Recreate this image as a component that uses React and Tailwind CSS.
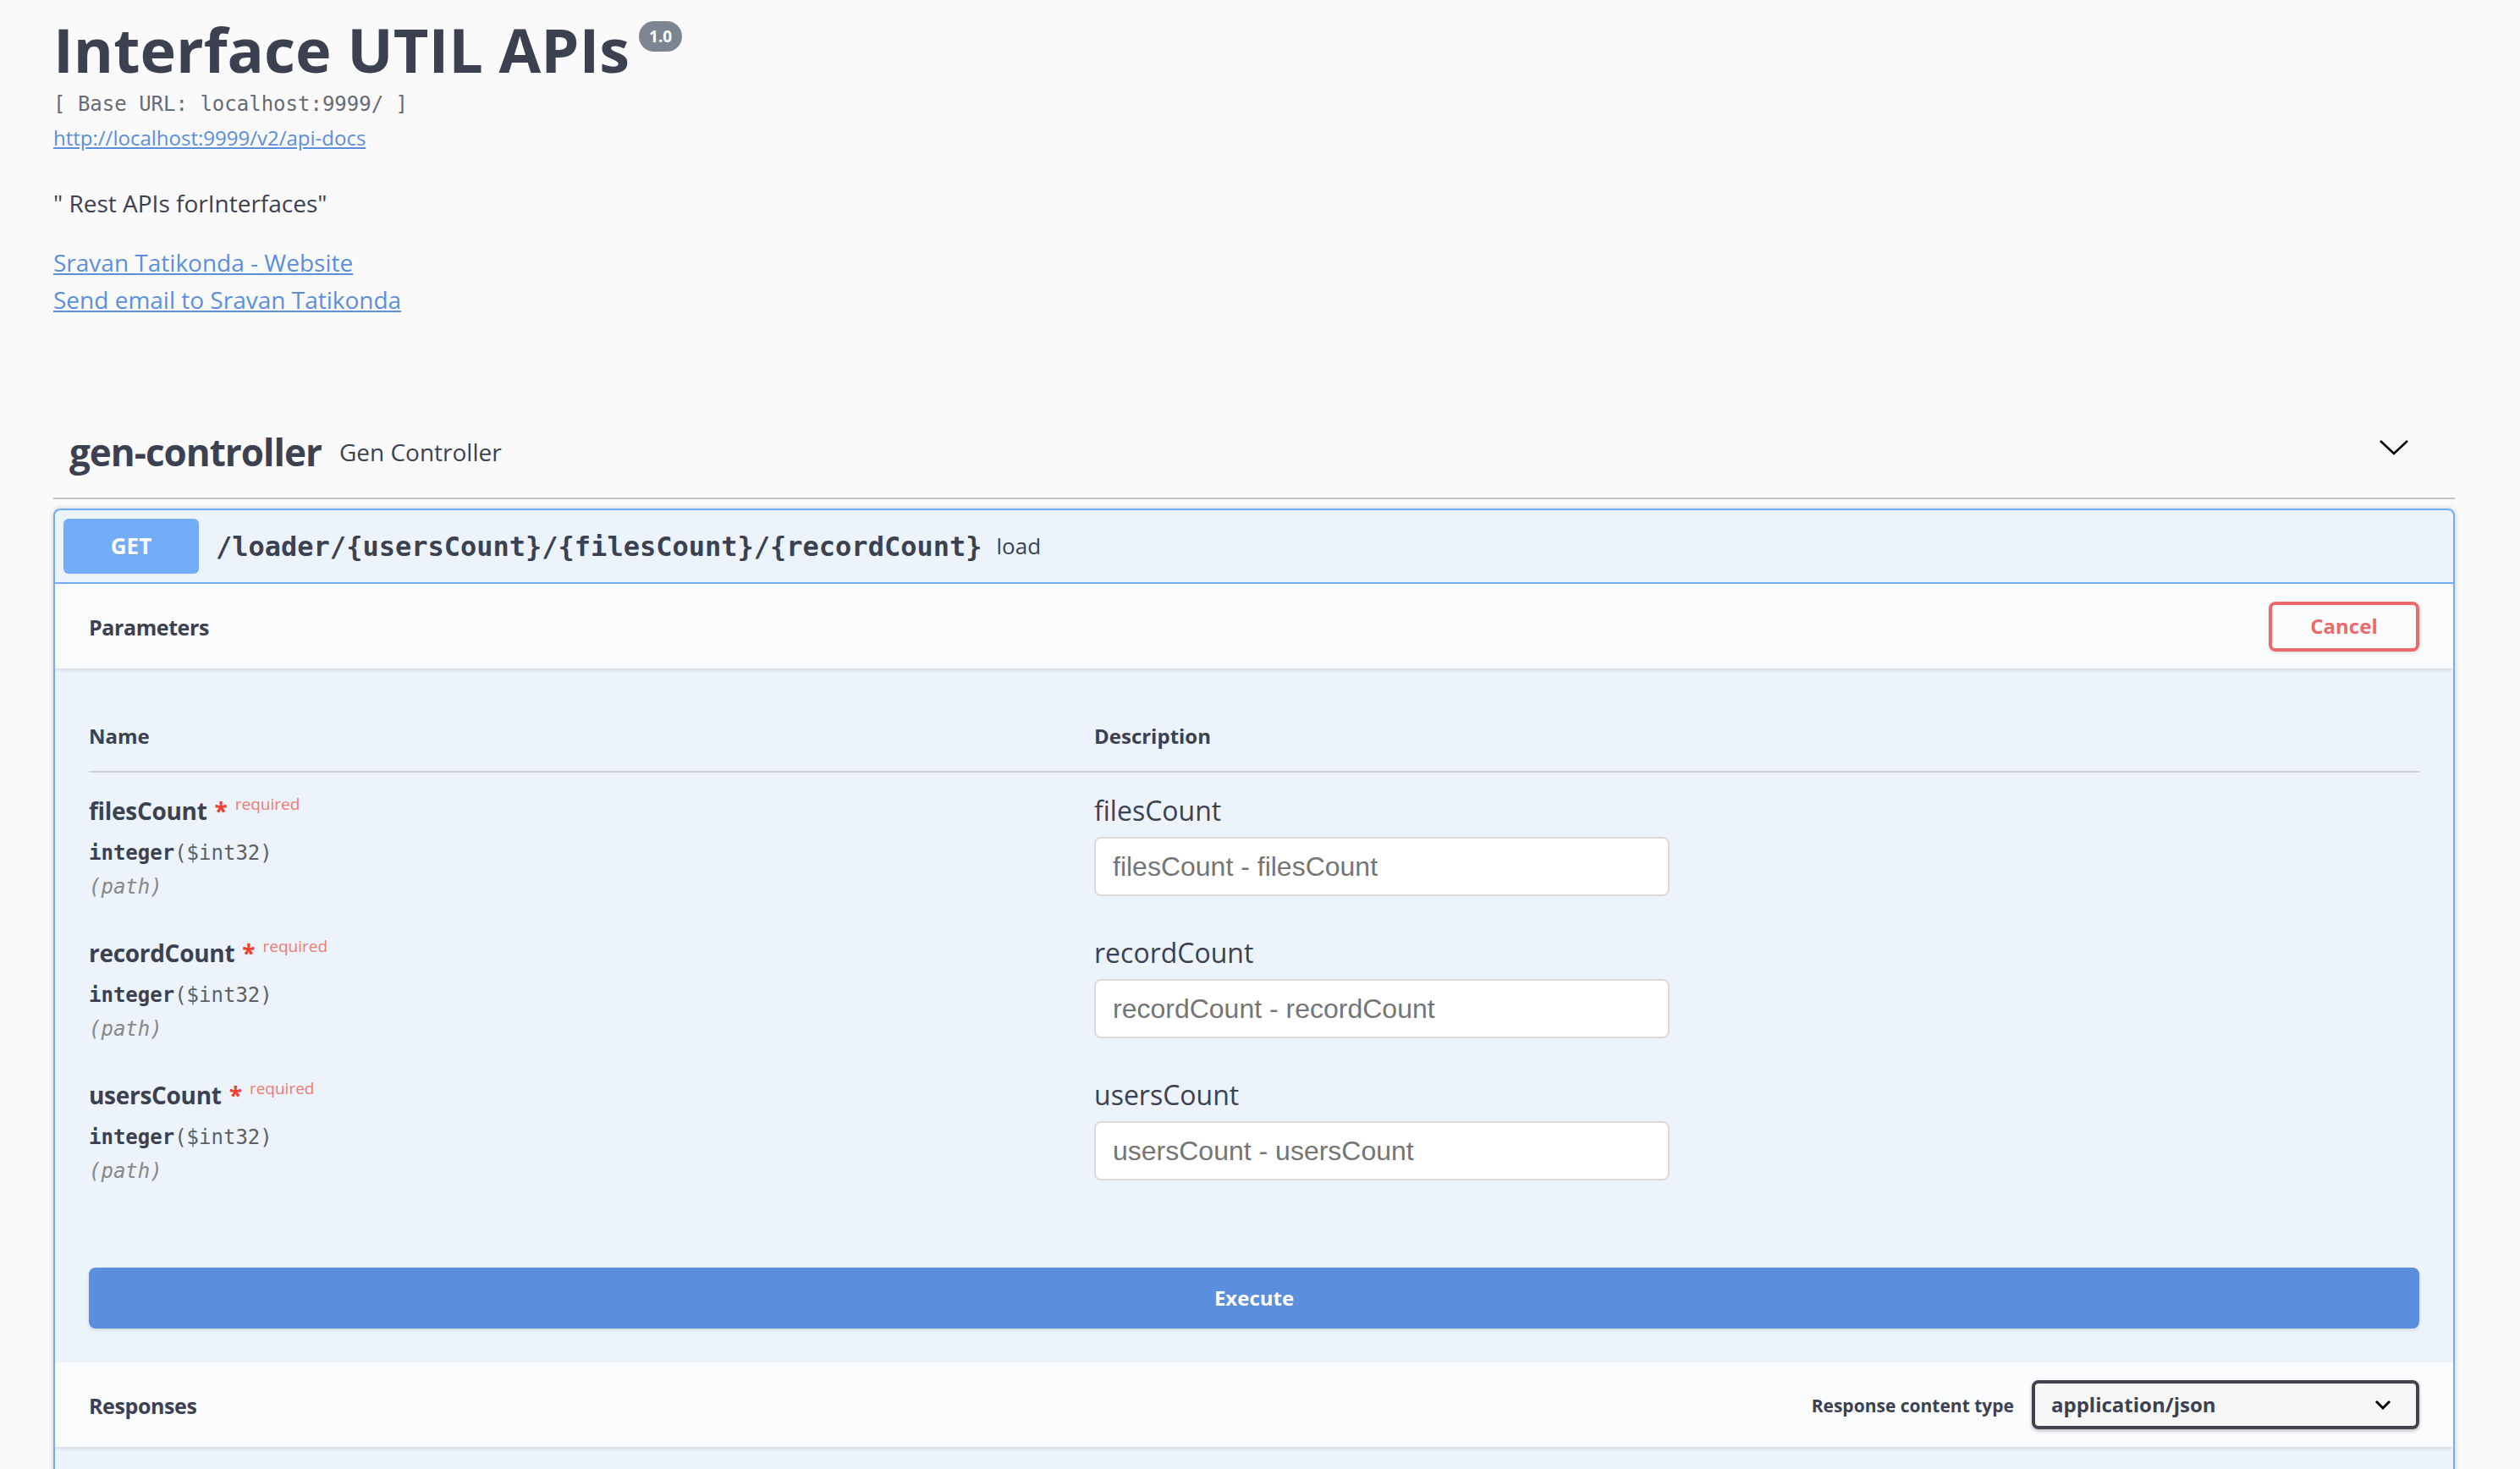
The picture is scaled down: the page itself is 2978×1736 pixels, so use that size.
import React from 'react';

const params = ['filesCount', 'recordCount', 'usersCount'];

const ParamRow = ({ name }) => (
    <div className="grid h-[168px] grid-cols-[1188px_1fr] pt-[25px]">
        {/* name column */}
        <div>
            <div className="flex items-start">
                <span className="text-[28px] leading-[40px] font-bold tracking-[-0.3px] text-[#3b4151]">{name}</span>
                <span className="ml-[9px] text-[28px] leading-[40px] font-bold text-[#f0402f]">*</span>
                <span className="ml-[9px] text-[19px] leading-[24px] text-[#ee7b73]">required</span>
            </div>
            <div className="mt-[15px] font-['DejaVu_Sans_Mono',monospace] text-[24px] leading-[30px]">
                <span className="font-semibold text-[#3b4151]">integer</span>
                <span className="text-[#606060]">($int32)</span>
            </div>
            <div className="mt-[10px] font-['DejaVu_Sans_Mono',monospace] text-[24px] leading-[30px] italic text-[#888888]">
                (path)
            </div>
        </div>

        {/* description column */}
        <div>
            <div className="text-[32px] leading-[40px] text-[#3b4151]">{name}</div>
            <input
                type="text"
                placeholder={`${name} - ${name}`}
                className="mt-[11px] h-[70px] w-[680px] rounded-[8px] border-[2px] border-[#d9d9d9] bg-white px-[20px]
                           font-['Liberation_Sans',Arial,sans-serif] text-[32px] text-[#3b4151] outline-none
                           placeholder:text-[#757575]"
            />
        </div>
    </div>
);

export default function App() {
    return (
        <div className="min-h-screen bg-[#fafafa] font-['Open_Sans',sans-serif] text-[#3b4151]">
            <div className="ml-[63px] w-[2838px]">
                {/* Info */}
                <div className="pt-[18px]">
                    <div className="flex items-start">
                        <h1 className="text-[72px] leading-[80px] font-bold text-[#3b4151]">
                            Interface UTIL APIs
                        </h1>
                        <span className="ml-[11px] mt-[7px] flex h-[36px] w-[51px] items-center justify-center rounded-full bg-[#7d8492] text-[19px] font-bold text-white">
                            1.0
                        </span>
                    </div>
                    <div className="mt-[10px] font-['DejaVu_Sans_Mono',monospace] text-[24px] leading-[30px] text-[#666b75]">
                        [ Base URL: localhost:9999/ ]
                    </div>
                    <div className="mt-[10px] text-[24px] leading-[30px]">
                        <a href="#" className="text-[#5b8fdc] underline">http://localhost:9999/v2/api-docs</a>
                    </div>
                    <div className="mt-[42px] text-[28px] leading-[40px] text-[#3b4151]">" Rest APIs forInterfaces"</div>
                    <div className="mt-[28px] text-[28px] leading-[44px]">
                        <a href="#" className="text-[#5b8fdc] underline">Sravan Tatikonda - Website</a>
                    </div>
                    <div className="text-[28px] leading-[44px]">
                        <a href="#" className="text-[#5b8fdc] underline">Send email to Sravan Tatikonda</a>
                    </div>
                </div>

                {/* Tag header */}
                <div className="mt-[104px] flex h-[110px] items-center border-b-[2px] border-[#c4c5c9] pl-[19px] pr-[54px]">
                    <h3 className="text-[44px] font-bold tracking-[-1px] text-[#3b4151]">gen-controller</h3>
                    <span className="ml-[21px] text-[28px] text-[#3b4151]">Gen Controller</span>
                    <div className="flex-1" />
                    <svg width="36" height="20" viewBox="0 0 36 20" className="-mt-[10px]">
                        <polyline points="2,2 18,17 34,2" fill="none" stroke="#000" strokeWidth="2.6" />
                    </svg>
                </div>

                {/* Operation block */}
                <div className="mt-[11px] overflow-hidden rounded-[8px] border-[2px] border-[#73adf5] bg-[#ecf3fb] shadow-[0_0_6px_rgba(0,0,0,0.19)]">
                    {/* Summary */}
                    <div className="flex items-center border-b-[2px] border-[#73adf5] p-[10px]">
                        <div className="flex h-[65px] w-[160px] items-center justify-center rounded-[6px] bg-[#73adf7] text-[26px] font-bold text-white [text-shadow:0_1px_0_rgba(0,0,0,0.1)]">
                            GET
                        </div>
                        <span className="ml-[20px] font-['DejaVu_Sans_Mono',monospace] text-[32px] font-semibold text-[#3b4151]">
                            /loader/{'{usersCount}'}/{'{filesCount}'}/{'{recordCount}'}
                        </span>
                        <span className="ml-[17px] text-[26px] text-[#3b4151]">load</span>
                    </div>

                    {/* Parameters header */}
                    <div className="relative flex h-[100px] items-center justify-between bg-[#fbfcfe] px-[40px] shadow-[0_2px_4px_rgba(0,0,0,0.1)]">
                        <h4 className="mt-[3px] text-[25px] font-bold tracking-[-0.4px] text-[#3b4151]">Parameters</h4>
                        <button className="flex h-[59px] w-[178px] items-center justify-center rounded-[8px] border-[4px] border-[#ec6a6a] text-[24px] font-bold text-[#ec6a6a] shadow-[0_2px_4px_rgba(0,0,0,0.1)]">
                            Cancel
                        </button>
                    </div>

                    {/* Parameters table */}
                    <div className="px-[40px] pt-[40px] pb-[40px]">
                        <div className="grid h-[83px] grid-cols-[1188px_1fr] items-center border-b-[2px] border-[#cbd0d8]">
                            <span className="-mt-[2px] text-[24px] font-bold text-[#3b4151]">Name</span>
                            <span className="-mt-[2px] text-[24px] font-bold text-[#3b4151]">Description</span>
                        </div>
                        {params.map((p) => (
                            <ParamRow key={p} name={p} />
                        ))}

                        <button className="mt-[81px] flex h-[72px] w-full items-center justify-center rounded-[8px] bg-[#5b8edc] text-[24px] font-bold text-white shadow-[0_2px_4px_rgba(0,0,0,0.1)]">
                            Execute
                        </button>
                    </div>

                    {/* Responses header */}
                    <div className="relative flex h-[100px] items-center justify-between bg-[#fbfcfe] px-[40px] shadow-[0_2px_4px_rgba(0,0,0,0.1)]">
                        <h4 className="mt-[4px] text-[25px] font-bold tracking-[-0.4px] text-[#3b4151]">Responses</h4>
                        <div className="flex items-center gap-[21px]">
                            <span className="mt-[4px] text-[21px] font-bold text-[#3b4151]">Response content type</span>
                            <div className="flex h-[58px] w-[458px] items-center justify-between rounded-[8px] border-[4px] border-[#41444e] bg-[#f7f7f7] pl-[19px] pr-[29px] shadow-[0_2px_4px_rgba(0,0,0,0.25)]">
                                <span className="text-[24px] font-bold text-[#3b4151]">application/json</span>
                                <svg width="20" height="12" viewBox="0 0 20 12">
                                    <polyline points="2,2 10,10 18,2" fill="none" stroke="#000" strokeWidth="3" />
                                </svg>
                            </div>
                        </div>
                    </div>

                    <div className="h-[240px]" />
                </div>
            </div>
        </div>
    );
}
